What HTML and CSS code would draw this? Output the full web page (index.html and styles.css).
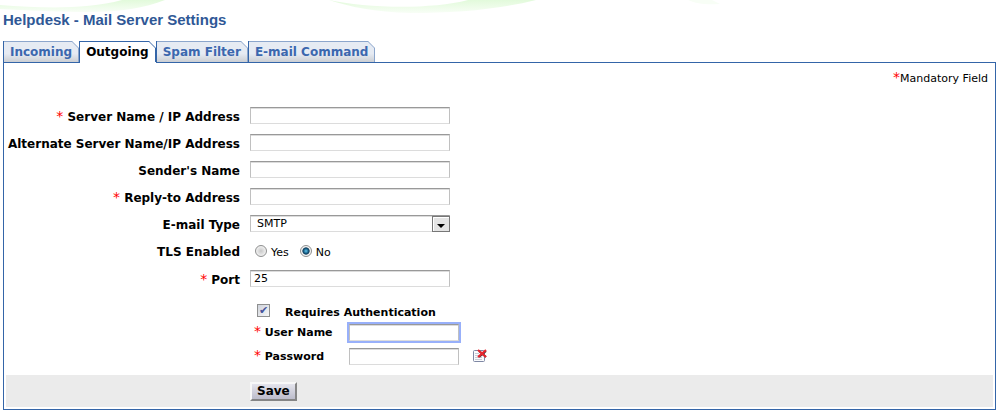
FILE: index.html
```html
<!DOCTYPE html>
<html lang="en">
<head>
	<meta charset="UTF-8">
	<title>Helpdesk - Mail Server Settings</title>
	<link rel="stylesheet" href="styles.css">
</head>
<body>
	<!-- header swoosh -->
	<svg class="swoosh" width="750" height="14" viewBox="0 0 750 14" aria-hidden="true">
		<defs>
			<linearGradient id="leaf" x1="0" y1="0" x2="0" y2="1">
				<stop offset="0" stop-color="#e2fadb"/>
				<stop offset="1" stop-color="#f8fef6"/>
			</linearGradient>
		</defs>
		<path fill="url(#leaf)" d="M0 5C40 8 85 10 122 0H165C145 8 120 12 90 12C50 12 25 10 0 9z"/>
		<path fill="url(#leaf)" d="M329 0C365 8 430 10 468 0H536C500 9 460 13 410 13C375 12 350 7 329 0z"/>
		<path fill="#f8fef6" d="M688 0H712L720 4C706 5 697 4 688 0z"/>
	</svg>

	<h1 class="title">Helpdesk - Mail Server Settings</h1>

	<nav class="tabs">
		<a class="tab" href="#incoming">Incoming
			<svg class="corner" viewBox="0 0 7 21"><path class="cut" d="M0 0H7V7z"/><path class="edge" d="M0 .5L6.5 7V21"/></svg>
		</a>
		<a class="tab active" href="#outgoing">Outgoing
			<svg class="corner" viewBox="0 0 7 21"><path class="cut" d="M0 0H7V7z"/><path class="edge" d="M0 .5L6.5 7V21"/></svg>
		</a>
		<a class="tab" href="#spam">Spam Filter
			<svg class="corner" viewBox="0 0 7 21"><path class="cut" d="M0 0H7V7z"/><path class="edge" d="M0 .5L6.5 7V21"/></svg>
		</a>
		<a class="tab" href="#command">E-mail Command
			<svg class="corner" viewBox="0 0 7 21"><path class="cut" d="M0 0H7V7z"/><path class="edge" d="M0 .5L6.5 7V21"/></svg>
		</a>
	</nav>

	<form class="panel">
		<p class="note"><span class="req">*</span>Mandatory Field</p>

		<div class="row">
			<label for="server"><span class="req">*</span> Server Name / IP Address</label>
			<input class="field" type="text" id="server">
		</div>
		<div class="row">
			<label for="alternate">Alternate Server Name/IP Address</label>
			<input class="field" type="text" id="alternate">
		</div>
		<div class="row">
			<label for="sender">Sender's Name</label>
			<input class="field" type="text" id="sender">
		</div>
		<div class="row">
			<label for="reply"><span class="req">*</span> Reply-to Address</label>
			<input class="field" type="text" id="reply">
		</div>
		<div class="row">
			<label for="type">E-mail Type</label>
			<div class="select">
				<select class="field" id="type">
					<option>SMTP</option>
					<option>SMTPS</option>
				</select>
				<svg class="arrow" width="18" height="16" viewBox="0 0 18 16" aria-hidden="true">
					<rect x=".5" y=".5" width="17" height="15" fill="#e4e4e4" stroke="#777"/>
					<path d="M1.5 15V1.5H17" fill="none" stroke="#fff"/>
					<path d="M5 8H13L9 12z" fill="#000"/>
				</svg>
			</div>
		</div>
		<div class="row tall">
			<span class="caption" id="tls">TLS Enabled</span>
			<div class="radios" role="radiogroup" aria-labelledby="tls">
				<input type="radio" name="tls" id="yes"><label for="yes">Yes</label>
				<input type="radio" name="tls" id="no" checked><label for="no">No</label>
			</div>
		</div>
		<div class="row">
			<label for="port"><span class="req">*</span> Port</label>
			<input class="field" type="text" id="port" value="25">
		</div>

		<div class="auth">
			<div class="auth-check">
				<input type="checkbox" id="auth" checked>
				<label for="auth">Requires Authentication</label>
			</div>
			<div class="auth-row">
				<label for="user"><span class="req">*</span> User Name</label>
				<input class="field small focused" type="text" id="user">
			</div>
			<div class="auth-row">
				<label for="password"><span class="req">*</span> Password</label>
				<input class="field small" type="password" id="password">
				<button class="clear" type="button" aria-label="Clear password">
					<svg width="15" height="14" viewBox="0 0 15 14">
						<rect x=".5" y="1.5" width="11" height="11" rx="1" fill="#fafbfd" stroke="#7f88a4"/>
						<path d="M2 4.5H6M2 6.5H6M2 8.5H9M2 10.5H9" stroke="#c9ccd6"/>
						<path d="M6 2L13 8M13 2L6 8" stroke="#5c3038" stroke-width="2"/>
						<path d="M5 1L13 8M13 1L5 8" stroke="#e8262f" stroke-width="2"/>
					</svg>
				</button>
			</div>
		</div>

		<div class="actions">
			<button class="save" type="submit">Save</button>
		</div>
	</form>
</body>
</html>
```
FILE: styles.css
```css
*{
	box-sizing: border-box;
}
body{
	margin: 0;
	padding: 0 3px 4px;
	background: #fff;
	color: #000;
	font-family: Verdana, "DejaVu Sans", sans-serif;
	font-size: 11px;
	line-height: 14px;
}
.swoosh{
	position: absolute;
	top: 0;
	left: 0;
}
.title{
	position: relative;
	margin: 0;
	padding: 12px 0 13px;
	color: #2f5896;
	font: bold 15px/16px "Liberation Sans", Arial, sans-serif;
}

/* tabs */
.tabs{
	display: flex;
	position: relative;
	z-index: 1;
}
.tab{
	display: flex;
	height: 21px;
	padding-left: 6px;
	border-left: 1px solid #3465a8;
	background: linear-gradient(#e6ebf3 60%, #cbced3);
	color: #3b67ae;
	font-size: 12px;
	font-weight: bold;
	line-height: 22px;
	text-decoration: none;
	white-space: nowrap;
	box-shadow: inset 0 1px #8ca6cc;
}
.tab.active{
	height: 22px;
	margin-bottom: -1px;
	background: #fff;
	color: #000;
	box-shadow: inset 0 1px #3465a8;
}
.corner{
	width: 7px;
	height: 21px;
}
.cut{
	fill: #fff;
}
.edge{
	fill: none;
	stroke: #8ca6cc;
}
.active .edge{
	stroke: #3465a8;
}

/* form */
.panel{
	border: 1px solid #3465a8;
	padding: 0 2px 2px;
}
.note{
	margin: 0;
	padding: 9px 5px 16px;
	text-align: right;
}
.req{
	color: #f00;
	font-size: 14px;
	font-weight: normal;
	line-height: 10px;
}
.row{
	display: grid;
	grid-template-columns: 234px 1fr;
	gap: 10px;
	align-items: center;
	height: 27px;
}
.tall{
	height: 28px;
}
.row > label,
.caption{
	padding-top: 2px;
	font-size: 12px;
	font-weight: bold;
	text-align: right;
	white-space: nowrap;
}
.field{
	width: 200px;
	height: 17px;
	margin: 0;
	padding: 0 3px;
	border: 1px solid #c0c0c0;
	border-top-color: #999;
	border-bottom-color: #dcdcdc;
	border-radius: 0;
	background: #fff;
	box-shadow: inset 0 1px #dcdcdc;
	color: #000;
	font: inherit;
}
.select{
	display: flex;
	position: relative;
	width: 200px;
}
select.field{
	appearance: none;
	padding: 1px 6px 0;
}
.arrow{
	position: absolute;
	top: 1px;
	right: 0;
	pointer-events: none;
}
.radios{
	display: flex;
	align-items: center;
	padding-left: 5px;
}
.radios input{
	appearance: none;
	width: 12px;
	height: 12px;
	margin: 0 4px 0 0;
	border: 1px solid #8e8f8f;
	border-radius: 50%;
	background: radial-gradient(#c8c8c8, #eee 65%);
}
.radios input:checked{
	background: radial-gradient(circle closest-side, #5fc6ee 0, #14567c 50%, #123b58 65%, #f4f4f4 80%);
}
.radios label{
	padding-top: 3px;
	margin-right: 11px;
}

.auth{
	padding: 9px 0 7px 244px;
}
.auth-check{
	display: flex;
	align-items: center;
	height: 19px;
	padding-left: 7px;
	font-weight: bold;
}
.auth-check label{
	padding: 4px 0 0 15px;
}
.auth-check input{
	appearance: none;
	width: 13px;
	height: 13px;
	margin: 0;
	border: 1px solid #8e8f8f;
	background: linear-gradient(135deg, #cfd3dc, #f6f6f6);
	color: #45549c;
	font: bold 11px/11px "DejaVu Sans", sans-serif;
	text-align: center;
}
.auth-check input:checked::before{
	content: "\2714";
}
.auth-row{
	display: flex;
	align-items: center;
	height: 24px;
	padding-left: 4px;
}
.auth-row label{
	width: 95px;
	padding-top: 2px;
	font-weight: bold;
}
.small{
	width: 110px;
}
.focused,
.small:focus{
	outline: 2px solid #98b0fa;
}
.clear{
	display: flex;
	margin-left: 14px;
	padding: 0;
	border: 0;
	background: none;
}

.actions{
	padding: 7px 0 6px 244px;
	background: #ebebeb;
}
.save{
	display: block;
	height: 19px;
	padding: 0 5px;
	border: 2px solid;
	border-color: #f8f8f8 #858585 #858585 #f8f8f8;
	background: linear-gradient(#e4e4ec, #bcbccb);
	color: #000;
	font: bold 12px/15px Verdana, "DejaVu Sans", sans-serif;
}
```
